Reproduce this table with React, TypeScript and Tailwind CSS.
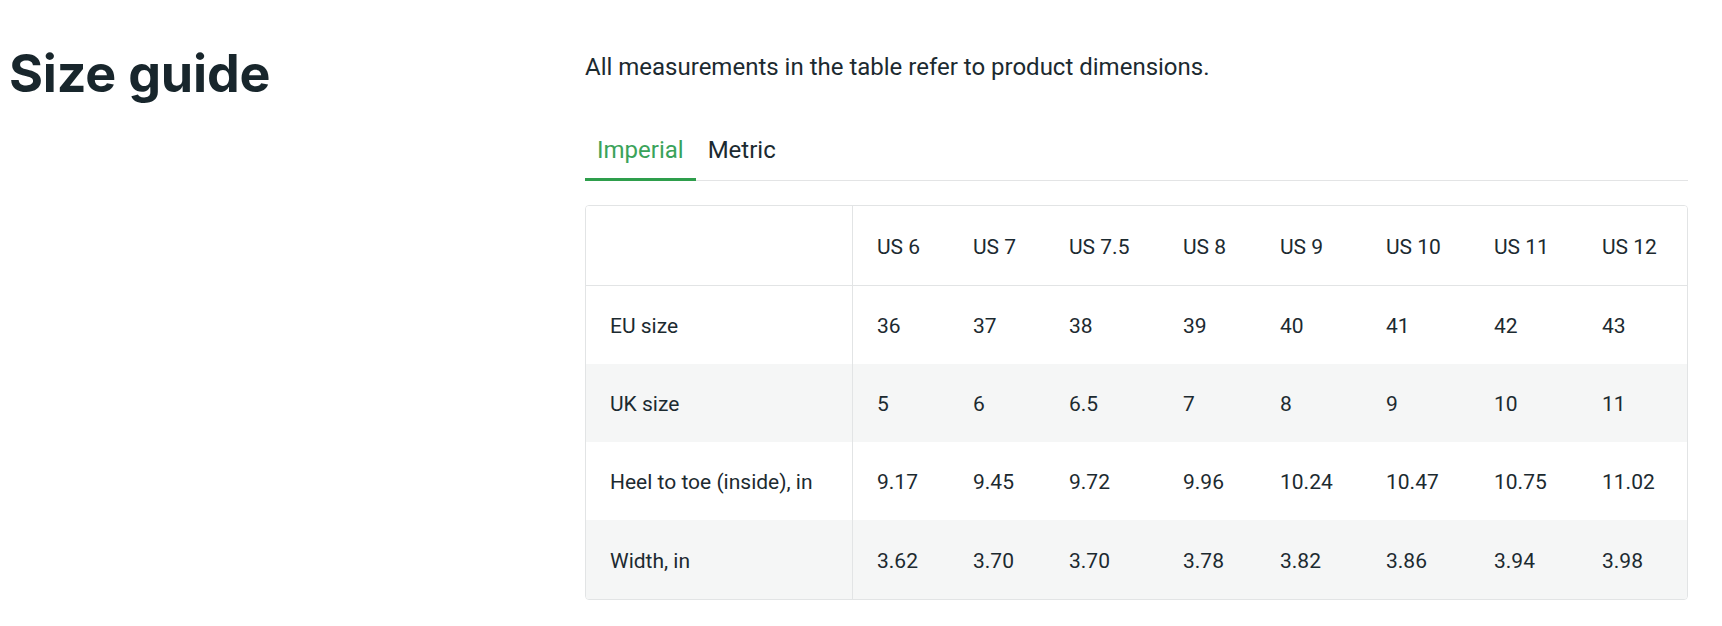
import React from "react";

const headers = ["US 6", "US 7", "US 7.5", "US 8", "US 9", "US 10", "US 11", "US 12"];

const rows: { label: string; values: string[]; shaded: boolean }[] = [
  { label: "EU size", values: ["36", "37", "38", "39", "40", "41", "42", "43"], shaded: false },
  { label: "UK size", values: ["5", "6", "6.5", "7", "8", "9", "10", "11"], shaded: true },
  {
    label: "Heel to toe (inside), in",
    values: ["9.17", "9.45", "9.72", "9.96", "10.24", "10.47", "10.75", "11.02"],
    shaded: false,
  },
  {
    label: "Width, in",
    values: ["3.62", "3.70", "3.70", "3.78", "3.82", "3.86", "3.94", "3.98"],
    shaded: true,
  },
];

const gridCols =
  "grid grid-cols-[267px_96px_96px_114px_97px_106px_108px_108px_1fr]";

export default function App() {
  return (
    <div className="flex min-h-[626px] w-full bg-white text-[#1c2a30]">
      <div className="w-[585px] shrink-0 pl-[9px] pt-[43px]">
        <h1 className="font-['Inter',sans-serif] text-[52px] font-bold leading-[62px] tracking-[-0.2px] text-[#18262c]">
          Size guide
        </h1>
      </div>

      <div className="flex-1 pr-[34px] pt-[53px] font-['Roboto',sans-serif]">
        <p className="text-[24px] leading-[28px] text-[#1c2a30]">
          All measurements in the table refer to product dimensions.
        </p>

        <div className="mt-[55px] flex border-b border-[#e3e4e5]">
          <button className="-mb-px border-b-[3px] border-[#2e9e4c] px-3 pb-[14px] text-[24px] leading-[28px] text-[#3aa35a]">
            Imperial
          </button>
          <button className="-mb-px border-b-[3px] border-transparent px-3 pb-[14px] text-[24px] leading-[28px] text-[#1c2a30]">
            Metric
          </button>
        </div>

        <div className="mt-6 overflow-hidden rounded-[4px] border border-[#e2e4e5] text-[21px] leading-[24px]">
          <div className={`${gridCols} h-[80px] border-b border-[#e2e4e5] bg-white`}>
            <div className="border-r border-[#e2e4e5]" />
            {headers.map((h) => (
              <div key={h} className="flex items-center pl-6 pt-[2px]">
                {h}
              </div>
            ))}
          </div>
          {rows.map((r, i) => (
            <div
              key={r.label}
              className={`${gridCols} ${i === 3 ? "h-[79px]" : "h-[78px]"} ${
                r.shaded ? "bg-[#f5f6f6]" : "bg-white"
              }`}
            >
              <div className="flex items-center border-r border-[#e2e4e5] pl-6 pt-[2px]">{r.label}</div>
              {r.values.map((v, j) => (
                <div key={j} className="flex items-center pl-6 pt-[2px]">
                  {v}
                </div>
              ))}
            </div>
          ))}
        </div>
      </div>
    </div>
  );
}
